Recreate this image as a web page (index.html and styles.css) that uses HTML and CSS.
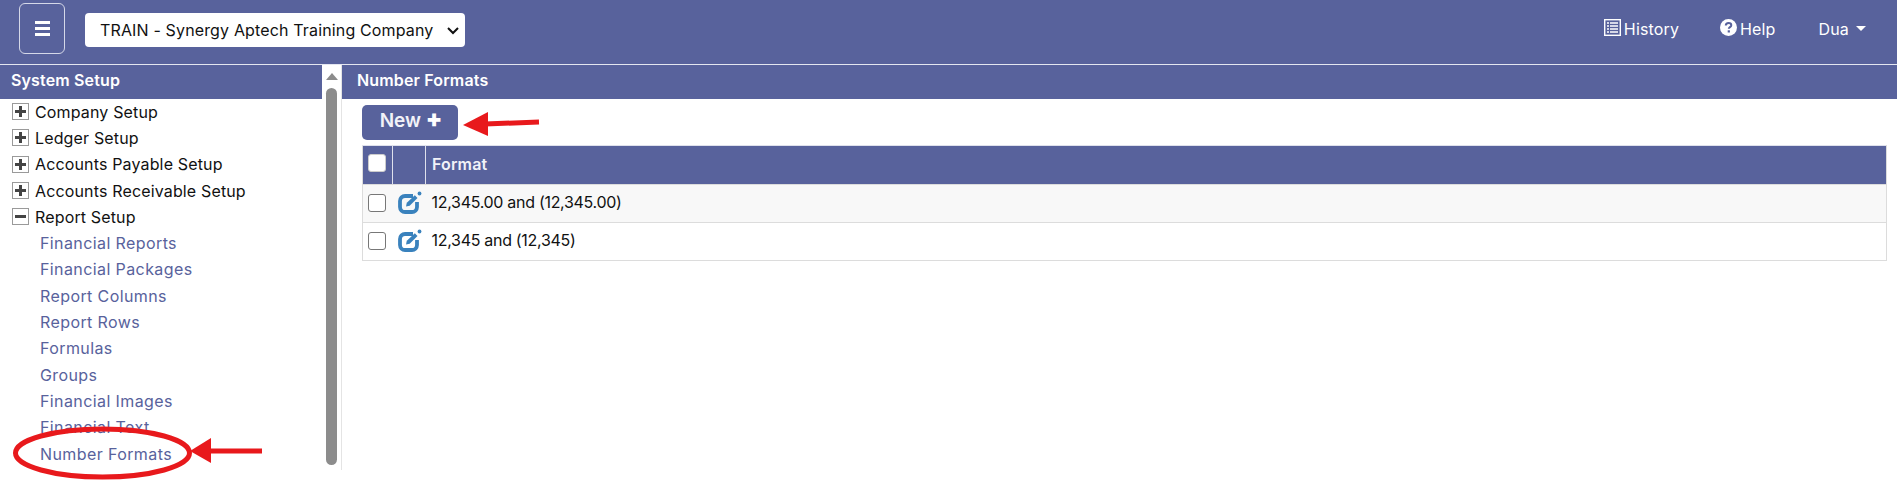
FILE: index.html
```html
<!DOCTYPE html>
<html lang="en">
<head>
    <meta charset="UTF-8">
    <title>Number Formats</title>
    <link rel="stylesheet" href="styles.css">
</head>
<body>

    <header class="topbar">
        <button class="menu-btn">
            <span></span><span></span><span></span>
        </button>
        <div class="company-select">
            <span>TRAIN - Synergy Aptech Training Company</span>
            <svg width="14" height="9" viewBox="0 0 14 9"><path d="M2 2l5 5 5-5" fill="none" stroke="#111" stroke-width="2"/></svg>
        </div>
        <nav class="top-links">
            <a class="top-link history">
                <svg width="17" height="17" viewBox="0 0 17 17"><rect x="0.7" y="0.7" width="15.6" height="15.6" fill="none" stroke="#fff" stroke-width="1.4"/><path d="M3 4h2M6 4h8M3 7h2M6 7h8M3 10h2M6 10h8M3 13h2M6 13h8" stroke="#fff" stroke-width="1.6"/></svg>
                History
            </a>
            <a class="top-link help">
                <svg width="17" height="17" viewBox="0 0 17 17"><circle cx="8.5" cy="8.5" r="8.5" fill="#fff"/><path d="M5.8 6.4c0-1.6 1.2-2.5 2.8-2.5s2.7.9 2.7 2.3c0 1.9-2.5 1.9-2.5 3.5" fill="none" stroke="#58629c" stroke-width="2"/><rect x="7.7" y="11.3" width="2.2" height="2.2" fill="#58629c"/></svg>
                Help
            </a>
            <a class="top-link user">Dua <i class="caret"></i></a>
        </nav>
    </header>

    <div class="layout">
        <aside class="sidebar">
            <div class="side-inner">
                <div class="panel-title side-title">System Setup</div>
                <ul class="tree">
                    <li><i class="tree-box plus"></i>Company Setup</li>
                    <li><i class="tree-box plus"></i>Ledger Setup</li>
                    <li><i class="tree-box plus"></i>Accounts Payable Setup</li>
                    <li><i class="tree-box plus"></i>Accounts Receivable Setup</li>
                    <li><i class="tree-box"></i>Report Setup</li>
                    <li class="child">Financial Reports</li>
                    <li class="child">Financial Packages</li>
                    <li class="child">Report Columns</li>
                    <li class="child">Report Rows</li>
                    <li class="child">Formulas</li>
                    <li class="child">Groups</li>
                    <li class="child">Financial Images</li>
                    <li class="child">Financial Text</li>
                    <li class="child">Number Formats</li>
                </ul>
            </div>
            <div class="scrollbar">
                <i class="scroll-up"></i>
                <div class="scroll-thumb"></div>
            </div>
        </aside>

        <main class="content">
            <div class="panel-title">Number Formats</div>
            <div class="content-body">
                <button class="new-btn">New <b>+</b></button>
                <table class="grid">
                    <tr class="grid-head">
                        <th class="col-check"><i class="check"></i></th>
                        <th class="col-edit"></th>
                        <th>Format</th>
                    </tr>
                    <tr class="odd">
                        <td class="col-check"><i class="check"></i></td>
                        <td class="col-edit">
                            <svg class="edit-icon" width="25" height="23" viewBox="0 0 25 23"><path d="M15 5H7a5 5 0 0 0-5 5v6a5 5 0 0 0 5 5h7a5 5 0 0 0 5-5v-5" fill="none" stroke="#3a82bd" stroke-width="3.8"/><path d="M8 15.5l.8-3.7 8-7.6 2.7 2.7-7.8 7.8z" fill="#3a82bd"/><circle cx="21.5" cy="2.5" r="1.9" fill="#3a82bd"/></svg>
                        </td>
                        <td>12,345.00 and (12,345.00)</td>
                    </tr>
                    <tr>
                        <td class="col-check"><i class="check"></i></td>
                        <td class="col-edit">
                            <svg class="edit-icon" width="25" height="23" viewBox="0 0 25 23"><path d="M15 5H7a5 5 0 0 0-5 5v6a5 5 0 0 0 5 5h7a5 5 0 0 0 5-5v-5" fill="none" stroke="#3a82bd" stroke-width="3.8"/><path d="M8 15.5l.8-3.7 8-7.6 2.7 2.7-7.8 7.8z" fill="#3a82bd"/><circle cx="21.5" cy="2.5" r="1.9" fill="#3a82bd"/></svg>
                        </td>
                        <td>12,345 and (12,345)</td>
                    </tr>
                </table>
            </div>
        </main>
    </div>

    <!-- red markup drawn over the screenshot -->
    <svg class="markup" width="1897" height="485" viewBox="0 0 1897 485">
        <ellipse cx="102.5" cy="453" rx="87" ry="24" fill="none" stroke="#e8191c" stroke-width="5"/>
        <path d="M262 451L208 451" stroke="#e8191c" stroke-width="5"/>
        <path d="M190 451L211 438V463z" fill="#e8191c"/>
        <path d="M539 122L485 124" stroke="#e8191c" stroke-width="5"/>
        <path d="M463 125L488 112V136z" fill="#e8191c"/>
    </svg>

</body>
</html>
```

FILE: styles.css
```css
* {
    margin: 0;
    padding: 0;
    box-sizing: border-box;
}

body {
    font-family: 'Inter', 'Liberation Sans', sans-serif;
    font-size: 16px;
    letter-spacing: 0.15px;
    background-color: #fff;
    color: #111;
    height: 485px;
    overflow: hidden;
    position: relative;
}

.topbar {
    height: 65px;
    background-color: #58629c;
    border-bottom: 1px solid #e4e6f0;
    display: flex;
    align-items: flex-start;
    padding: 3px 31px 0 19px;
}

.menu-btn {
    width: 46px;
    height: 51px;
    background: none;
    border: 1px solid #d5d8e8;
    border-radius: 6px;
    display: flex;
    flex-direction: column;
    justify-content: center;
    align-items: center;
    gap: 3px;
}

.menu-btn span {
    width: 15px;
    height: 3px;
    background-color: #fff;
}

.company-select {
    width: 380px;
    height: 34px;
    margin: 10px 0 0 20px;
    padding: 0 5px 0 15px;
    background-color: #fff;
    border-radius: 4px;
    display: flex;
    align-items: center;
    justify-content: space-between;
    color: #111;
}

.top-links {
    margin-left: auto;
    display: flex;
    align-items: center;
    height: 51px;
    color: #fff;
}

.top-link {
    display: flex;
    align-items: center;
    gap: 3px;
    margin-left: 41px;
}

.top-link svg {
    margin-top: -3px;
}

.top-link.user {
    margin-left: 43px;
}

.caret {
    display: inline-block;
    margin-left: 4px;
    border-left: 5px solid transparent;
    border-right: 5px solid transparent;
    border-top: 5px solid #fff;
}

.layout {
    display: flex;
    height: 405px;
}

.sidebar {
    width: 342px;
    display: flex;
    border-right: 1px solid #e4e4e4;
}

.side-inner {
    width: 322px;
}

.panel-title {
    height: 34px;
    line-height: 31px;
    background-color: #58629c;
    color: #fff;
    font-weight: 600;
    padding-left: 15px;
}

.side-title {
    padding-left: 11px;
}

.tree {
    list-style: none;
}

.tree li {
    height: 26.3px;
    display: flex;
    align-items: center;
    padding-left: 12px;
    padding-bottom: 1px;
}

.tree .child {
    padding-left: 40px;
    color: #58629c;
    letter-spacing: 0.4px;
}

.tree-box {
    width: 17px;
    height: 17px;
    margin-right: 6px;
    border: 1px solid #9a9a9a;
    position: relative;
}

.tree-box::before {
    content: "";
    position: absolute;
    left: 2px;
    top: 6px;
    width: 11px;
    height: 3px;
    background-color: #444;
}

.tree-box.plus::after {
    content: "";
    position: absolute;
    left: 6px;
    top: 2px;
    width: 3px;
    height: 11px;
    background-color: #444;
}

.scrollbar {
    width: 19px;
    display: flex;
    flex-direction: column;
    align-items: center;
}

.scroll-up {
    margin-top: 8px;
    border-left: 6px solid transparent;
    border-right: 6px solid transparent;
    border-bottom: 7px solid #8c8c8c;
}

.scroll-thumb {
    width: 11px;
    height: 377px;
    margin-top: 8px;
    background-color: #8c8c8c;
    border-radius: 6px;
}

.content {
    flex: 1;
}

.content-body {
    padding: 6px 10px 0 20px;
}

.new-btn {
    display: block;
    width: 96px;
    height: 35px;
    padding: 0 0 6px 2px;
    background-color: #58629c;
    color: #f2f2f8;
    border: none;
    border-radius: 5px;
    font-family: inherit;
    font-size: 19px;
    font-weight: 600;
}

.new-btn b {
    font-size: 24px;
    color: #fff;
    line-height: 1;
}

.grid {
    width: 100%;
    margin-top: 5px;
    border-collapse: collapse;
}

.grid th, .grid td {
    text-align: left;
    padding-left: 6px;
    padding-bottom: 3px;
    border-right: 1px solid #dcdcdc;
    border-bottom: 1px solid #dcdcdc;
}

.grid th {
    height: 39px;
    background-color: #58629c;
    color: #f2f2f8;
    font-weight: 600;
    border-top: 1px solid #dfe1ec;
    border-right: 1px solid #dfe1ec;
}

.grid th:last-child, .grid td:last-child {
    border-right: 1px solid #dcdcdc;
}

.grid td {
    height: 38px;
    border-right: none;
    letter-spacing: -0.3px;
}

.grid th:first-child, .grid td:first-child {
    border-left: 1px solid #dcdcdc;
}

.grid .odd td {
    background-color: #f8f8f8;
}

.grid .col-check {
    width: 30px;
    padding-left: 5px;
    padding-bottom: 0;
}

.grid .col-edit {
    width: 33px;
    padding-left: 5px;
    padding-bottom: 2px;
}

.check {
    display: block;
    width: 18px;
    height: 18px;
    margin-bottom: 2px;
    background-color: #fff;
    border: 1px solid #777;
    border-radius: 3px;
}

.grid th .check {
    margin-bottom: 4px;
    border-color: #ccc;
}

.edit-icon {
    display: block;
}

.markup {
    position: absolute;
    left: 0;
    top: 0;
    pointer-events: none;
}
```
